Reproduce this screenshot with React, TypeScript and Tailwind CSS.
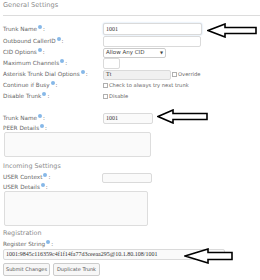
import type { ReactNode } from "react";

type FieldProps = {
  label: string;
  height: string;
  children?: ReactNode;
};

function Help() {
  return (
    <span className="relative -top-[2px] ml-[1px] inline-block h-[4px] w-[4px] rounded-full bg-[#86b8e8]" />
  );
}

function Label({ text }: { text: string }) {
  return (
    <span className="whitespace-nowrap">
      {text}
      <Help />
      <span className="ml-[1px]">:</span>
    </span>
  );
}

function Field({ label, height, children }: FieldProps) {
  return (
    <div className={`grid grid-cols-[100px_1fr] items-center ${height}`}>
      <Label text={label} />
      <div className="flex items-center">{children}</div>
    </div>
  );
}

function Check({ text }: { text: string }) {
  return (
    <span className="flex items-center text-[5.2px] text-[#666]">
      <span className="mr-[1px] inline-block h-[5px] w-[5px] border border-[#b0b0b0] bg-white" />
      {text}
    </span>
  );
}

type ArrowProps = {
  left: number;
  top: number;
  head: number;
  length: number;
  height: number;
  shaft: number;
};

function Arrow({ left, top, head, length, height, shaft }: ArrowProps) {
  const mid = height / 2;
  const s1 = mid - shaft / 2;
  const s2 = mid + shaft / 2;
  const points = [
    `1,${mid}`,
    `${head},1`,
    `${head},${s1}`,
    `${length - 1},${s1}`,
    `${length - 1},${s2}`,
    `${head},${s2}`,
    `${head},${height - 1}`,
  ].join(" ");
  return (
    <svg
      className="absolute"
      style={{ left, top }}
      width={length}
      height={height}
      viewBox={`0 0 ${length} ${height}`}
    >
      <polygon points={points} fill="white" stroke="black" strokeWidth="1.6" strokeLinejoin="miter" />
    </svg>
  );
}

const inputBase = "h-full rounded-[2px] border border-[#dadada] px-[2px] flex items-center font-['Liberation_Serif',serif] text-[6px] text-[#333]";

export default function App() {
  return (
    <div className="relative h-[280px] w-[260px] overflow-hidden bg-white font-['DejaVu_Sans',sans-serif] text-[5.7px] text-[#666]">
      <div className="pl-[3px]">
        <div className="flex h-[12px] items-center text-[6.6px] text-[#8a8a8a]">General Settings</div>
        <div className="mt-[3px] border-t border-[#dcdcdc]" />

        <div className="mt-[7px]">
          <Field label="Trunk Name" height="h-[12px]">
            <div className="h-[12px] w-[99px]">
              <div className={`${inputBase} border-[#8fb8de] bg-white shadow-[0_0_2px_#b9d4ee]`}>1001</div>
            </div>
          </Field>
          <Field label="Outbound CallerID" height="h-[12px]">
            <div className="h-[11px] w-[98px]">
              <div className={`${inputBase} bg-white`} />
            </div>
          </Field>
          <Field label="CID Options" height="h-[11px]">
            <div className="flex h-[10px] w-[63px] items-center justify-between rounded-[2px] border border-[#ccc] bg-white px-[2px] text-[5.5px] text-[#444]">
              <span>Allow Any CID</span>
              <span className="text-[4px]">▼</span>
            </div>
          </Field>
          <Field label="Maximum Channels" height="h-[11px]">
            <div className="h-[11px] w-[17px]">
              <div className={`${inputBase} bg-white`} />
            </div>
          </Field>
          <Field label="Asterisk Trunk Dial Options" height="h-[11px]">
            <div className="h-[10px] w-[68px]">
              <div className={`${inputBase} bg-[#f0f0f0]`}>Tt</div>
            </div>
            <span className="ml-[1px]">
              <Check text="Override" />
            </span>
          </Field>
          <Field label="Continue if Busy" height="h-[11px]">
            <Check text="Check to always try next trunk" />
          </Field>
          <Field label="Disable Trunk" height="h-[11px]">
            <Check text="Disable" />
          </Field>

          <div className="h-[10px]" />

          <Field label="Trunk Name" height="h-[12px]">
            <div className="h-[11px] w-[50px]">
              <div className={`${inputBase} bg-[#fafafa] text-[5.5px]`}>1001</div>
            </div>
          </Field>
          <div className="flex h-[8px] items-center">
            <Label text="PEER Details" />
          </div>
          <div className="ml-[1px] h-[25px] w-[147px] rounded-[2px] border border-[#ddd] bg-[#fafafa]" />
        </div>

        <div className="mt-[5px] flex h-[10px] items-center text-[6.4px] text-[#8a8a8a]">Incoming Settings</div>
        <Field label="USER Context" height="h-[11px]">
          <div className="-ml-[1px] h-[10px] w-[50px]">
            <div className={`${inputBase} bg-[#fafafa]`} />
          </div>
        </Field>
        <div className="flex h-[8px] items-center">
          <Label text="USER Details" />
        </div>
        <div className="ml-[1px] h-[35px] w-[144px] rounded-[2px] border border-[#ddd] bg-[#fafafa]" />

        <div className="mt-[3px] flex h-[10px] items-center text-[6.4px] text-[#8a8a8a]">Registration</div>
        <div className="mt-[1px] flex h-[9px] items-center">
          <Label text="Register String" />
        </div>
        <div className="h-[11px] w-[222px]">
          <div className={`${inputBase} bg-[#fafafa] text-[6.2px]`}>1001:9845c116359c4f1f14fa77d3ceeaa295@10.1.80.108/1001</div>
        </div>

        <div className="mt-[3px] flex gap-[3px]">
          <button className="h-[13px] w-[47px] rounded-[2px] border border-[#ccc] bg-[#f7f7f7] text-[5px] text-[#555]">
            Submit Changes
          </button>
          <button className="h-[13px] w-[47px] rounded-[2px] border border-[#ccc] bg-[#f7f7f7] text-[5px] text-[#555]">
            Duplicate Trunk
          </button>
        </div>
      </div>

      <Arrow left={207} top={23} head={18} length={50} height={15} shaft={6} />
      <Arrow left={157} top={109} head={16} length={51} height={15} shaft={6} />
      <Arrow left={184} top={248} head={24} length={49} height={16} shaft={7} />
    </div>
  );
}
